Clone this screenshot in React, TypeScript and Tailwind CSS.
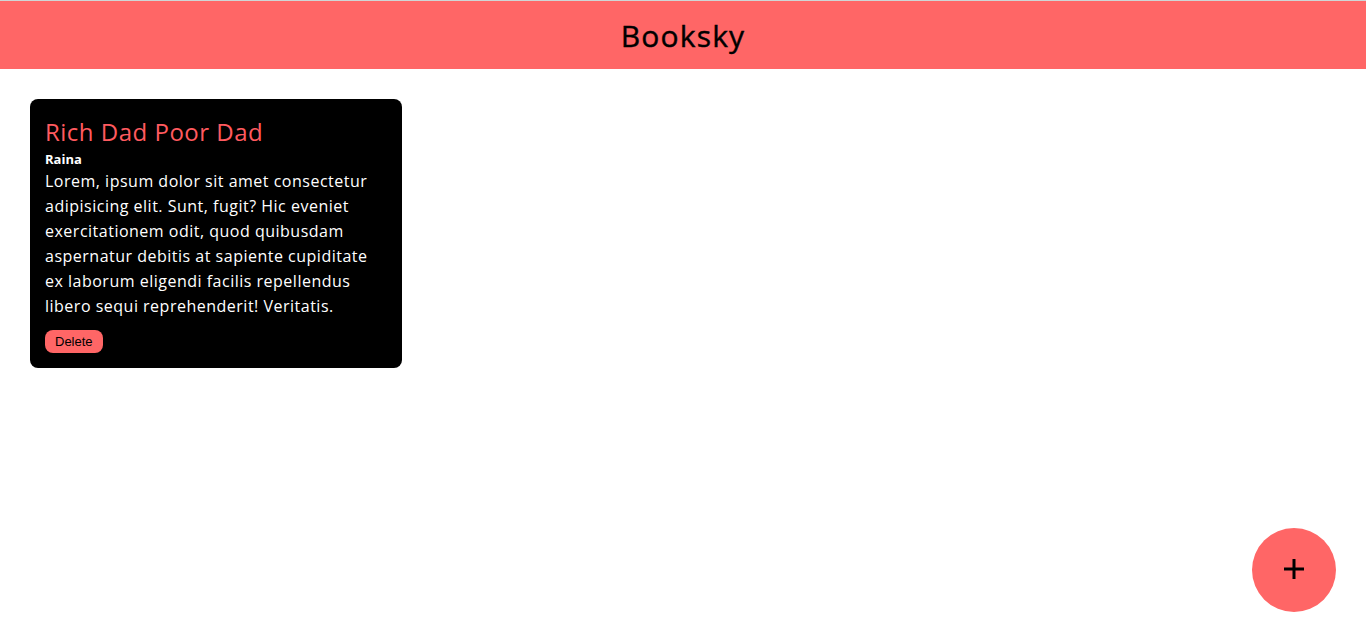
import * as React from 'react';

const FONT = { fontFamily: '"Open Sans", "Noto Sans", sans-serif' };

type Book = { id: number; title: string; author: string; text: string };

const BOOKS: Book[] = [
  {
    id: 1,
    title: 'Rich Dad Poor Dad',
    author: 'Raina',
    text: 'Lorem, ipsum dolor sit amet consectetur adipisicing elit. Sunt, fugit? Hic eveniet exercitationem odit, quod quibusdam aspernatur debitis at sapiente cupiditate ex laborum eligendi facilis repellendus libero sequi reprehenderit! Veritatis.',
  },
];

const BookCard: React.FC<{ book: Book }> = ({ book }) => (
  <div className="w-[372px] rounded-lg bg-black p-[15px]">
    <h2 className="text-[24px] leading-[35px] tracking-[0.5px] text-[#ff5a5f]">{book.title}</h2>
    <p className="text-[13px] font-bold leading-[20px] text-white">{book.author}</p>
    <p className="text-[16px] leading-[25px] tracking-[0.5px] text-white">{book.text}</p>
    <button
      className="mt-[11px] flex h-[23px] items-center rounded-lg bg-[#ff6666] px-[10px] text-[13px] text-black"
      style={{ fontFamily: '"Liberation Sans", Arial, sans-serif' }}
    >
      Delete
    </button>
  </div>
);

export default function App() {
  return (
    <div className="min-h-[641px] bg-white" style={FONT}>
      <header className="flex h-[69px] items-center justify-center border-t border-[#cfd6d6] bg-[#ff6666]">
        <h1 className="text-[30px] tracking-[1.2px] text-black [-webkit-text-stroke:0.4px_black]">Booksky</h1>
      </header>
      <main className="flex flex-wrap gap-[30px] px-[30px] pt-[30px]">
        {BOOKS.map((b) => (
          <BookCard key={b.id} book={b} />
        ))}
      </main>
      <button className="fixed right-[30px] bottom-[29px] flex h-[84px] w-[84px] items-center justify-center rounded-full bg-[#ff6666]">
        <svg width="22" height="22" viewBox="0 0 22 22" className="-mt-[2px]">
          <path d="M11 1v20M1 11h20" stroke="black" strokeWidth="3" />
        </svg>
      </button>
    </div>
  );
}
